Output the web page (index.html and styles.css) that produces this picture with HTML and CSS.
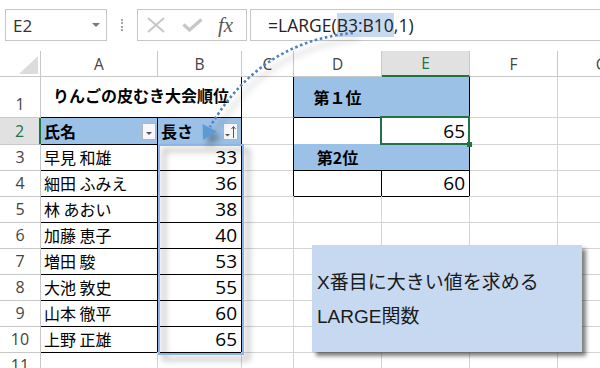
FILE: index.html
```html
<!DOCTYPE html>
<html lang="ja">
<head>
  <meta charset="UTF-8">
  <meta name="viewport" content="width=device-width, initial-scale=1.0">
  <title>LARGE関数</title>
  <link rel="stylesheet" href="styles.css">
</head>
<body>
  <!-- Formula Bar -->
  <div class="formula-bar">
    <div class="name-box">E2<span class="name-arrow"></span></div>
    <div class="grip"></div>
    <div class="fx-box">
      <svg class="icon-cancel" width="18" height="16" viewBox="0 0 18 16">
        <path d="M1 1 L17 15 M17 1 L1 15" stroke="#c6c6c6" stroke-width="2" fill="none"/>
      </svg>
      <svg class="icon-enter" width="21" height="14" viewBox="0 0 21 14">
        <path d="M1.5 6.5 L7.5 12 L19.5 1.5" stroke="#c6c6c6" stroke-width="3.2" fill="none"/>
      </svg>
      <span class="fx">fx</span>
    </div>
    <div class="formula">=LARGE(<span class="ref">B3:B10</span>,1)</div>
  </div>

  <!-- Sheet -->
  <div class="sheet">
    <div class="row head">
      <div class="cell corner"><span class="corner-mark"></span></div>
      <div class="cell">A</div>
      <div class="cell">B</div>
      <div class="cell">C</div>
      <div class="cell">D</div>
      <div class="cell active-col">E</div>
      <div class="cell">F</div>
      <div class="cell">G</div>
    </div>

    <div class="row tall">
      <div class="cell rh rh-bottom">1</div>
      <div class="cell title bold center br bb">りんごの皮むき大会順位</div>
      <div class="cell br"></div>
      <div class="cell fill fill-r bb bold center">第１位</div>
      <div class="cell fill br bb"></div>
      <div class="cell"></div>
      <div class="cell"></div>
    </div>

    <div class="row">
      <div class="cell rh active-row">2</div>
      <div class="cell fill bold br bb has-btn">氏名<span class="filter-btn"></span></div>
      <div class="cell fill bold br bb has-btn">長さ
        <span class="sort-btn">
          <svg width="13" height="15" viewBox="0 0 13 15">
            <path d="M1 10 L6 10 L3.5 12.5 Z" fill="#555"/>
            <path d="M9.5 14 L9.5 3 M7.5 5 L9.5 2.5 L11.5 5" stroke="#555" stroke-width="1" fill="none"/>
          </svg>
        </span>
      </div>
      <div class="cell br"></div>
      <div class="cell br bb"></div>
      <div class="cell num br bb sel">65<span class="sel-box"><span class="handle"></span></span></div>
      <div class="cell"></div>
      <div class="cell"></div>
    </div>

    <div class="row">
      <div class="cell rh">3</div>
      <div class="cell br bb">早見 和雄</div>
      <div class="cell num br bb">33</div>
      <div class="cell br"></div>
      <div class="cell fill fill-r bb bold center">第2位</div>
      <div class="cell fill br bb"></div>
      <div class="cell"></div>
      <div class="cell"></div>
    </div>

    <div class="row">
      <div class="cell rh">4</div>
      <div class="cell br bb">細田 ふみえ</div>
      <div class="cell num br bb">36</div>
      <div class="cell br"></div>
      <div class="cell br bb"></div>
      <div class="cell num br bb">60</div>
      <div class="cell"></div>
      <div class="cell"></div>
    </div>

    <div class="row">
      <div class="cell rh">5</div>
      <div class="cell br bb">林 あおい</div>
      <div class="cell num br bb">38</div>
      <div class="cell"></div>
      <div class="cell"></div>
      <div class="cell"></div>
      <div class="cell"></div>
      <div class="cell"></div>
    </div>

    <div class="row">
      <div class="cell rh">6</div>
      <div class="cell br bb">加藤 恵子</div>
      <div class="cell num br bb">40</div>
      <div class="cell"></div>
      <div class="cell"></div>
      <div class="cell"></div>
      <div class="cell"></div>
      <div class="cell"></div>
    </div>

    <div class="row">
      <div class="cell rh">7</div>
      <div class="cell br bb">増田 駿</div>
      <div class="cell num br bb">53</div>
      <div class="cell"></div>
      <div class="cell"></div>
      <div class="cell"></div>
      <div class="cell"></div>
      <div class="cell"></div>
    </div>

    <div class="row">
      <div class="cell rh">8</div>
      <div class="cell br bb">大池 敦史</div>
      <div class="cell num br bb">55</div>
      <div class="cell"></div>
      <div class="cell"></div>
      <div class="cell"></div>
      <div class="cell"></div>
      <div class="cell"></div>
    </div>

    <div class="row">
      <div class="cell rh">9</div>
      <div class="cell br bb">山本 徹平</div>
      <div class="cell num br bb">60</div>
      <div class="cell"></div>
      <div class="cell"></div>
      <div class="cell"></div>
      <div class="cell"></div>
      <div class="cell"></div>
    </div>

    <div class="row">
      <div class="cell rh">10</div>
      <div class="cell br bb">上野 正雄</div>
      <div class="cell num br bb">65</div>
      <div class="cell"></div>
      <div class="cell"></div>
      <div class="cell"></div>
      <div class="cell"></div>
      <div class="cell"></div>
    </div>

    <div class="row">
      <div class="cell rh">11</div>
      <div class="cell"></div>
      <div class="cell"></div>
      <div class="cell"></div>
      <div class="cell"></div>
      <div class="cell"></div>
      <div class="cell"></div>
      <div class="cell"></div>
    </div>
  </div>

  <!-- Range highlight B3:B10 -->
  <div class="range"></div>

  <!-- Dotted arrow from formula to range -->
  <svg class="arrow" width="600" height="368" viewBox="0 0 600 368">
    <path d="M353 33 C300 38 248 62 210 127" fill="none" stroke="#4f81bd" stroke-width="2.6" stroke-dasharray="2.6 2.6"/>
    <polygon points="202.6,123.9 216.6,131.5 203,140" fill="#5b9bd5"/>
  </svg>

  <!-- Note box -->
  <div class="note">
    X番目に大きい値を求める<br>
    LARGE関数
  </div>
</body>
</html>
```

FILE: styles.css
```css
/* Global Styles */
body {
  margin: 0;
  width: 600px;
  height: 368px;
  overflow: hidden;
  position: relative;
  background: #fff;
  color: #000;
  font-family: "Noto Sans CJK JP", sans-serif;
}

/* Formula Bar */
.formula-bar {
  display: flex;
  height: 51px;
  padding-top: 9px;
  box-sizing: border-box;
  font-family: "Open Sans", "Noto Sans CJK JP", sans-serif;
}

.formula-bar > div {
  height: 32px;
  box-sizing: border-box;
}

.name-box {
  width: 102px;
  margin-left: 5px;
  padding-left: 7px;
  border: 1px solid #c6c6c6;
  display: flex;
  align-items: center;
  font-size: 17px;
  color: #333;
}

.name-arrow {
  margin-left: auto;
  margin-right: 6px;
  border-left: 4px solid transparent;
  border-right: 4px solid transparent;
  border-top: 4px solid #7a7a7a;
}

.grip {
  width: 2px;
  margin-left: 14px;
  display: flex;
  align-items: center;
}

.grip::before {
  content: "";
  height: 12px;
  border-left: 2px dotted #a6a6a6;
}

.fx-box {
  width: 110px;
  margin-left: 14px;
  padding-left: 9px;
  border: 1px solid #c6c6c6;
  display: flex;
  align-items: center;
}

.icon-enter {
  margin-left: 17px;
}

.fx {
  margin-left: 15px;
  font-family: "Liberation Serif", serif;
  font-style: italic;
  font-size: 21px;
  line-height: 1;
  color: #5a5a5a;
}

.formula {
  flex: 1;
  margin-left: 3px;
  padding-left: 17px;
  border: 1px solid #c6c6c6;
  border-right: none;
  display: flex;
  align-items: center;
  font-size: 17.5px;
  color: #222;
  white-space: nowrap;
}

.ref {
  background: #c6d9f1;
}

/* Sheet Grid */
.row {
  display: grid;
  grid-template-columns: 41px 117px 84px 52px 88px 88px 88px 88px;
  height: 26px;
}

.row.tall {
  height: 41px;
}

.cell {
  box-sizing: border-box;
  border-right: 1px solid #d4d4d4;
  border-bottom: 1px solid #d4d4d4;
  display: flex;
  align-items: center;
  padding: 0 3px;
  font-size: 16px;
  white-space: nowrap;
  min-width: 0;
}

/* Headers */
.head .cell,
.rh {
  justify-content: center;
  font-family: "Open Sans", sans-serif;
  color: #444;
  border-color: #c8c8c8;
}

.head .cell {
  font-size: 15.5px;
}

.rh {
  font-size: 16px;
}

.rh-bottom {
  align-items: flex-end;
  padding-bottom: 2px;
}

.head .corner {
  justify-content: flex-end;
  align-items: flex-end;
  padding: 0 2px 2px 0;
}

.corner-mark {
  width: 0;
  height: 0;
  border-left: 19px solid transparent;
  border-bottom: 18px solid #dcdcdc;
}

.head .active-col {
  background: #e1e1e1;
  color: #217346;
  border-bottom: 2px solid #217346;
}

.rh.active-row {
  background: #e1e1e1;
  color: #217346;
  border-right: 2px solid #217346;
}

/* Cell Formats */
.fill {
  background: #9bc2e6;
}

.br {
  border-right-color: #000;
}

.bb {
  border-bottom-color: #000;
}

.fill-r {
  border-right-color: #9bc2e6;
}

.bold {
  font-weight: bold;
}

.center {
  justify-content: center;
}

.title {
  grid-column: span 2;
  padding-bottom: 4px;
}

.num {
  justify-content: flex-end;
  padding-right: 4px;
  font-family: "Open Sans", sans-serif;
  font-size: 19px;
}

/* Filter Buttons */
.has-btn {
  padding-right: 1px;
}

.filter-btn,
.sort-btn {
  margin-left: auto;
  height: 17px;
  box-sizing: border-box;
  border: 1px solid #b4b4b4;
  background: #f7f7f7;
  display: flex;
  justify-content: center;
}

.filter-btn {
  width: 14px;
  align-items: flex-end;
  padding-bottom: 4px;
}

.filter-btn::after {
  content: "";
  border-left: 3px solid transparent;
  border-right: 3px solid transparent;
  border-top: 3px solid #555;
}

.sort-btn {
  width: 15px;
  margin-right: 2px;
  align-items: center;
}

/* Active Cell */
.sel {
  position: relative;
}

.sel-box {
  position: absolute;
  top: -2px;
  left: -2px;
  right: -1px;
  bottom: -1px;
  border: 2px solid #217346;
}

.handle {
  position: absolute;
  right: -4px;
  bottom: -4px;
  width: 5px;
  height: 5px;
  background: #217346;
}

/* Overlays */
.range {
  position: absolute;
  left: 158px;
  top: 144px;
  width: 86px;
  height: 211px;
  box-sizing: border-box;
  border: 2px solid #8db4e2;
  filter: drop-shadow(5px 5px 3px rgba(0, 0, 0, 0.45));
}

.arrow {
  position: absolute;
  left: 0;
  top: 0;
  pointer-events: none;
  filter: drop-shadow(5px 6px 3px rgba(0, 0, 0, 0.35));
}

.note {
  position: absolute;
  left: 312px;
  top: 245px;
  width: 270px;
  height: 107px;
  box-sizing: border-box;
  padding: 21px 0 0 5px;
  background: #c6d9f1;
  box-shadow: 4px 4px 4px rgba(0, 0, 0, 0.5);
  font-family: "Liberation Sans", "Noto Sans CJK JP", sans-serif;
  font-size: 19px;
  line-height: 34px;
  color: #1a1a1a;
}
```
